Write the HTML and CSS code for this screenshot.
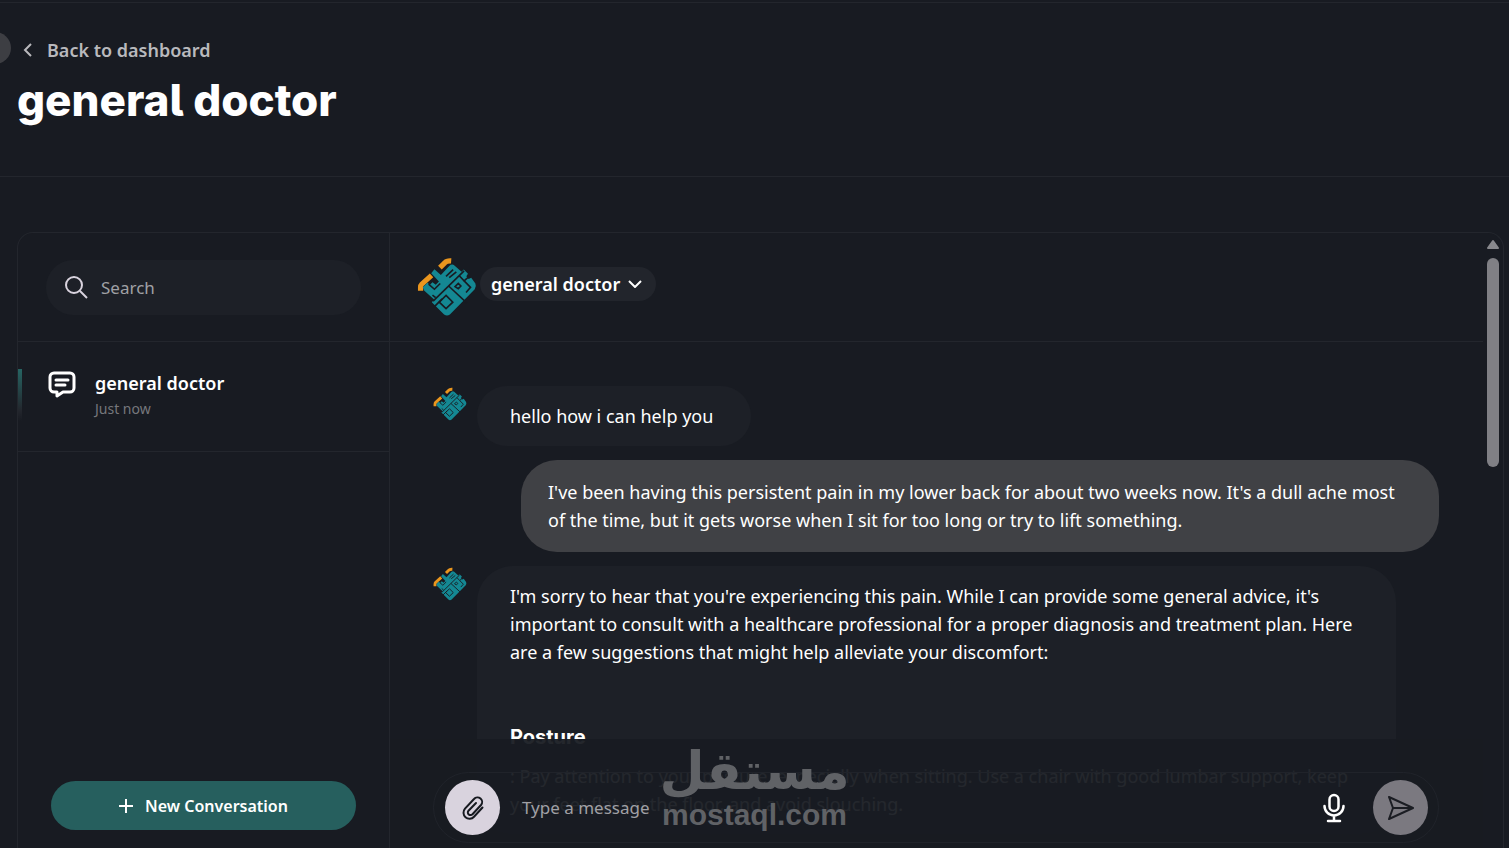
FILE: index.html
```html
<!DOCTYPE html>
<html lang="en">
<head>
    <meta charset="UTF-8">
    <meta name="viewport" content="width=device-width, initial-scale=1.0">
    <title>general doctor</title>
    <link rel="stylesheet" href="styles.css">
</head>
<body>
    <!-- shared logo -->
    <svg class="defs" width="0" height="0" aria-hidden="true">
        <symbol id="logo" viewBox="0 0 186 186">
            <g fill="none" stroke="#ea961e" stroke-width="16" stroke-linejoin="round">
                <path d="M11 105V94Q11 88 15 84L45 57"/>
                <path d="M71 33L86 18Q92 11 106 12"/>
            </g>
            <path d="M54 38L74 56L100 28Q108 20 116 26L138 46L145 39L158 52L153 60L160 68L168 64L181 82Q185 91 179 100L102 178Q93 185 84 178L46 140L53 132L22 104L18 94L32 80L40 86L48 78L58 86L68 76L44 50z" fill="#148893"/>
            <g fill="none" stroke="#181b22" stroke-width="5">
                <path d="M50 137L146 43"/>
                <path d="M90 60L112 39M100 64L122 46"/>
                <path d="M36 84L54 100L72 82M48 118L58 126"/>
                <path d="M98 90L154 142"/>
                <path d="M131 58L146 74L162 60"/>
                <path d="M118 92L128 82L136 90L128 98z"/>
                <path d="M146 74L166 94L152 110"/>
                <path d="M90 119L111 140L90 160L69 140z"/>
                <path d="M54 154L78 130"/>
            </g>
        </symbol>
    </svg>

    <header class="page-header">
        <span class="edge-dot"></span>
        <a class="back-link" href="#">
            <svg width="10" height="14" viewBox="0 0 10 14" fill="none" stroke="currentColor" stroke-width="2"><path d="M8 1L2 7l6 6"/></svg>
            Back to dashboard
        </a>
        <h1>general doctor</h1>
    </header>

    <main class="panel">
        <aside class="sidebar">
            <div class="search-wrap">
                <label class="search">
                    <svg width="24" height="24" viewBox="0 0 24 24" fill="none" stroke="#d9d3de" stroke-width="2"><circle cx="10" cy="9" r="8"/><path d="M16 15l7 7"/></svg>
                    <input type="text" placeholder="Search" aria-label="Search">
                </label>
            </div>
            <a class="conversation" href="#">
                <svg width="28" height="28" viewBox="0 0 28 28" fill="none" stroke="#fff" stroke-width="3" stroke-linejoin="round"><path d="M6 3h16a4 4 0 0 1 4 4v11a4 4 0 0 1-4 4h-7l-6 4v-4H6a4 4 0 0 1-4-4V7a4 4 0 0 1 4-4z"/><path d="M8 10h12M8 15h9" stroke-linecap="round"/></svg>
                <span class="conversation-text">
                    <strong>general doctor</strong>
                    <small>Just now</small>
                </span>
            </a>
            <button class="new-conversation" type="button">
                <svg width="14" height="14" viewBox="0 0 14 14" stroke="#fff" stroke-width="2"><path d="M7 0v14M0 7h14"/></svg>
                New Conversation
            </button>
        </aside>

        <section class="chat">
            <div class="chat-header">
                <svg class="logo-large"><use href="#logo"/></svg>
                <button class="model" type="button">
                    general doctor
                    <svg width="14" height="8" viewBox="0 0 14 8" fill="none" stroke="#fff" stroke-width="2"><path d="M1 1l6 6 6-6"/></svg>
                </button>
            </div>

            <div class="messages">
                <div class="message">
                    <svg class="avatar"><use href="#logo"/></svg>
                    <div class="bubble">
                        <p>hello how i can help you</p>
                    </div>
                </div>
                <div class="message user">
                    <div class="bubble">
                        <p>I've been having this persistent pain in my lower back for about two weeks now. It's a dull ache most<br>of the time, but it gets worse when I sit for too long or try to lift something.</p>
                    </div>
                </div>
                <div class="message">
                    <svg class="avatar"><use href="#logo"/></svg>
                    <div class="bubble wide">
                        <p>I'm sorry to hear that you're experiencing this pain. While I can provide some general advice, it's<br>important to consult with a healthcare professional for a proper diagnosis and treatment plan. Here<br>are a few suggestions that might help alleviate your discomfort:</p>
                        <h2>Posture</h2>
                        <p>: Pay attention to your posture, especially when sitting. Use a chair with good lumbar support, keep<br>your feet flat on the floor, and avoid slouching.</p>
                    </div>
                </div>
            </div>

            <div class="scrollbar">
                <svg width="14" height="11" viewBox="0 0 14 11"><path d="M7 2L12 9H2z" fill="#88888d" stroke="#88888d" stroke-width="2" stroke-linejoin="round"/></svg>
                <span class="thumb"></span>
            </div>

            <div class="composer-wrap">
                <form class="composer">
                    <button class="round" type="button" aria-label="Attach file">
                        <svg width="24" height="26" viewBox="0 0 24 26" fill="none" stroke="#16191f" stroke-width="2" stroke-linecap="round"><path d="M21.500 12.500L13 21.700a6 6 0 0 1-9-8L13 4a4.600 4.600 0 0 1 7 6l-8.500 9.200a2.600 2.600 0 0 1-4-3.500L15 8"/></svg>
                    </button>
                    <input type="text" placeholder="Type a message" aria-label="Type a message">
                    <button class="mic" type="button" aria-label="Voice message">
                        <svg width="22" height="30" viewBox="0 0 22 30" fill="none" stroke="#fff" stroke-width="2.500" stroke-linecap="round"><rect x="6.500" y="2" width="9" height="16" rx="4.500"/><path d="M1.500 13a9.500 9.500 0 0 0 19 0M11 22.500V28M5 28h12"/></svg>
                    </button>
                    <button class="round send" type="submit" aria-label="Send">
                        <svg width="26" height="24" viewBox="0 0 26 24" fill="none" stroke="#1b1d23" stroke-width="2" stroke-linejoin="round"><path d="M1 1l24 11L1 23l4-11zM5 12h20"/></svg>
                    </button>
                </form>
            </div>
        </section>
    </main>

    <div class="watermark">
        <span class="watermark-ar" lang="ar" dir="rtl">مستقل</span>
        <span class="watermark-en">mostaql.com</span>
    </div>
</body>
</html>
```
FILE: styles.css
```css
* {
    box-sizing: border-box;
}
body {
    margin: 0;
    height: 100vh;
    overflow: hidden;
    display: flex;
    flex-direction: column;
    background-color: #181b22;
    color: #fff;
    font-family: "Noto Sans", "Open Sans", sans-serif;
    font-size: 18px;
}
button, input {
    font: inherit;
    color: inherit;
    border: none;
    background: none;
    padding: 0;
}
button {
    cursor: pointer;
}
a {
    color: inherit;
    text-decoration: none;
}
svg {
    flex: none;
}
.defs {
    position: absolute;
}

.page-header {
    position: relative;
    margin-top: 2px;
    height: 175px;
    padding: 34px 17px 0;
    border-top: 1px solid #23262d;
    border-bottom: 1px solid #23262d;
}
.edge-dot {
    position: absolute;
    left: -21px;
    top: 29px;
    width: 32px;
    height: 32px;
    border-radius: 50%;
    background-color: #3d3e43;
}
.back-link {
    display: flex;
    align-items: center;
    gap: 14px;
    padding-left: 6px;
    line-height: 26px;
    font-weight: 600;
    color: #b9b9bd;
}
h1 {
    margin: 7px 0 0;
    font-family: Inter, sans-serif;
    font-feature-settings: "cv05";
    font-size: 44px;
    line-height: 60px;
    font-weight: 800;
}

.panel {
    flex: 1;
    min-height: 0;
    display: flex;
    margin: 55px 5px 0 17px;
    border: 1px solid #23262d;
    border-bottom: none;
    border-radius: 16px 16px 0 0;
}
.sidebar {
    width: 372px;
    flex: none;
    display: flex;
    flex-direction: column;
    border-right: 1px solid #23262d;
}
.search-wrap {
    height: 109px;
    padding: 27px 28px;
    border-bottom: 1px solid #23262d;
}
.search {
    display: flex;
    align-items: center;
    gap: 13px;
    height: 55px;
    padding: 0 18px;
    border-radius: 28px;
    background-color: #1d2027;
}
.search input {
    width: 100%;
    font-size: 17px;
    outline: none;
}
input::placeholder {
    color: #a0a0a5;
    opacity: 1;
}
.conversation {
    position: relative;
    display: flex;
    gap: 19px;
    height: 110px;
    padding: 28px 30px;
    border-bottom: 1px solid #23262d;
}
.conversation::before {
    content: "";
    position: absolute;
    left: 0;
    top: 27px;
    width: 4px;
    height: 52px;
    background: linear-gradient(#266563, #23262d 80%, #181b22);
}
.conversation-text {
    display: flex;
    flex-direction: column;
    line-height: 26px;
}
.conversation strong {
    font-weight: 600;
}
.conversation small {
    font-size: 14px;
    color: #76777c;
}
.new-conversation {
    display: flex;
    align-items: center;
    justify-content: center;
    gap: 12px;
    height: 49px;
    margin: auto 33px 18px;
    border-radius: 25px;
    background-color: #265f5e;
    font-size: 16px;
    font-weight: 600;
}

.chat {
    position: relative;
    flex: 1;
    min-width: 0;
    display: flex;
    flex-direction: column;
    overflow: hidden;
}
.chat-header {
    flex: none;
    display: flex;
    align-items: center;
    gap: 3px;
    height: 109px;
    margin-right: 20px;
    padding-left: 27px;
    border-bottom: 1px solid #23262d;
}
.logo-large {
    width: 60px;
    height: 60px;
}
.model {
    display: flex;
    align-items: center;
    gap: 8px;
    height: 34px;
    margin-bottom: 6px;
    padding: 0 14px 0 11px;
    border-radius: 17px;
    background-color: #22252c;
    font-weight: 600;
}
.messages {
    flex: 1;
    min-height: 0;
    display: flex;
    flex-direction: column;
    gap: 14px;
    padding: 44px 64px 0 43px;
    overflow: hidden;
}
.message {
    flex: none;
    display: flex;
    gap: 10px;
}
.avatar {
    width: 34px;
    height: 34px;
    margin-top: 1px;
}
.bubble {
    padding: 16px 38px 16px 33px;
    border-radius: 36px;
    background-color: #1d2027;
    line-height: 28px;
}
.bubble p {
    margin: 0;
}
.message.user {
    justify-content: flex-end;
}
.user .bubble {
    width: 918px;
    padding: 18px 27px;
    background-color: #404145;
}
.bubble.wide {
    width: 919px;
}
.bubble h2 {
    margin: 56px 0 10px;
    font-family: Inter, sans-serif;
    font-size: 20px;
    font-weight: 700;
    line-height: 30px;
}
.scrollbar {
    position: absolute;
    top: 6px;
    right: 3px;
    width: 14px;
    display: flex;
    flex-direction: column;
    align-items: center;
    gap: 8px;
}
.thumb {
    width: 12px;
    height: 209px;
    border-radius: 6px;
    background-color: #808085;
}

.composer-wrap {
    position: absolute;
    left: 0;
    right: 20px;
    bottom: 0;
    padding: 33px 44px 5px 43px;
    background-color: rgba(24, 27, 34, 0.95);
}
.composer {
    display: flex;
    align-items: center;
    height: 71px;
    padding: 0 10px 0 11px;
    border: 1px solid #20232a;
    border-radius: 36px;
}
.composer input {
    flex: 1;
    min-width: 0;
    padding: 0 22px;
    font-size: 17px;
    outline: none;
}
.round {
    display: flex;
    align-items: center;
    justify-content: center;
    width: 55px;
    height: 55px;
    border-radius: 50%;
    background-color: #d9d3de;
}
.round.send {
    margin-left: 28px;
    background-color: #7b7980;
}
.mic {
    display: flex;
}

.watermark {
    position: absolute;
    left: 50%;
    bottom: 15px;
    transform: translateX(-50%);
    display: flex;
    flex-direction: column;
    align-items: center;
    color: #606266;
    font-weight: 700;
    pointer-events: none;
}
.watermark-ar {
    font-family: "DejaVu Sans", sans-serif;
    font-size: 52px;
    line-height: 52px;
}
.watermark-en {
    font-family: "Liberation Sans", sans-serif;
    font-size: 30px;
    line-height: 36px;
}
```
